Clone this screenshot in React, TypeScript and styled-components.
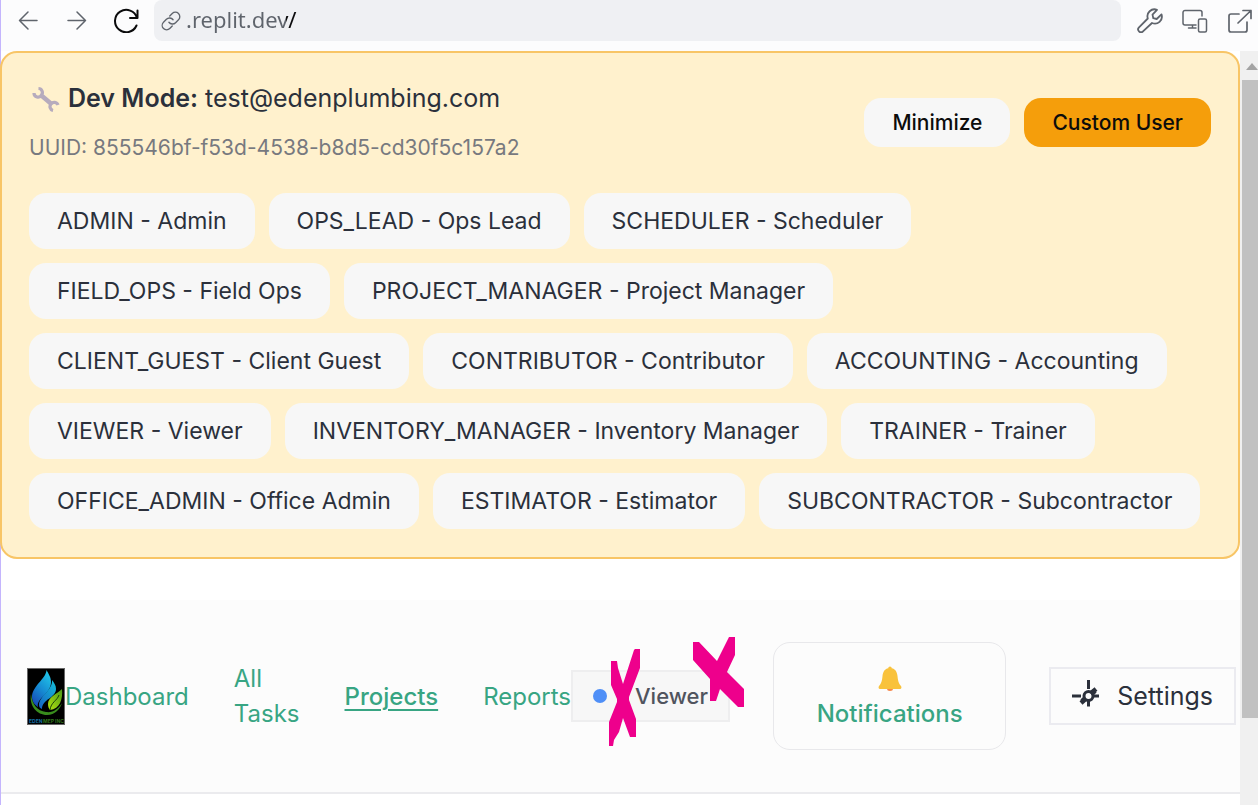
import React from "react";
import styled, { createGlobalStyle } from "styled-components";

const GlobalStyle = createGlobalStyle`
  *, *::before, *::after { box-sizing: border-box; }
  body {
    margin: 0;
    background: #ffffff;
    color: #2b303b;
    font-family: Inter, "Liberation Sans", sans-serif;
  }
  button, input { font-family: inherit; }
  button { cursor: pointer; }
`;

const Window = styled.div`
  display: flex;
  flex-direction: column;
  min-height: 100vh;
  border-left: 1px solid #c4b5fd;
`;

const Toolbar = styled.header`
  display: flex;
  align-items: flex-start;
  height: 51px;
  padding: 0 5px 0 14px;
  background: #fcfcfd;
`;

const IconButton = styled.button<{ $tone?: string }>`
  display: flex;
  align-items: center;
  justify-content: center;
  flex: none;
  width: 26px;
  height: 40px;
  padding: 0;
  border: 0;
  background: none;
  color: ${(p) => p.$tone ?? "#5f646c"};
`;

const History = styled.div`
  display: flex;
  gap: 23px;
`;

const AddressBar = styled.label`
  display: flex;
  align-items: center;
  flex: 1;
  gap: 5px;
  height: 41px;
  margin: 0 16px 0 15px;
  padding: 0 7px;
  border-radius: 8px;
  background: #eff0f3;
  color: #5f646c;
`;

const AddressInput = styled.input`
  flex: 1;
  min-width: 0;
  height: 40px;
  padding: 0 0 4px;
  border: 0;
  outline: 0;
  background: linear-gradient(90deg, #5f646c 100px, #0b0b0c 100px);
  background-clip: text;
  color: transparent;
  font-family: "Noto Sans", sans-serif;
  font-size: 22px;
`;

const Tools = styled.div`
  display: flex;
  gap: 19px;
`;

const Viewport = styled.div`
  display: flex;
  flex: 1;
`;

const Page = styled.main`
  flex: 1;
  min-width: 0;
`;

const DevCard = styled.section`
  padding: 28px 27px;
  margin-left: -1px;
  border: 2px solid #f8c566;
  border-radius: 17px;
  background: #fff1cd;
`;

const CardHeader = styled.div`
  display: flex;
  align-items: center;
  justify-content: space-between;
  margin-bottom: 29px;
`;

const Title = styled.p`
  display: flex;
  align-items: center;
  gap: 8px;
  margin: 0 0 15px;
  font-size: 25px;
  line-height: 35px;
`;

const Strong = styled.strong`
  font-weight: 600;
`;

const Uuid = styled.p`
  margin: 0;
  color: #77797f;
  font-size: 21px;
  line-height: 33px;
`;

const PillGroup = styled.div`
  display: flex;
  flex-wrap: wrap;
  gap: 14px;
`;

const Pill = styled.button<{ $compact?: boolean; $accent?: boolean }>`
  height: ${(p) => (p.$compact ? 49 : 56)}px;
  padding: 0 28px;
  border: 0;
  border-radius: 17px;
  background: ${(p) => (p.$accent ? "#f59e0b" : "#f7f7f7")};
  color: ${(p) => (p.$compact ? "#0c0c0c" : "#2b303b")};
  font-size: ${(p) => (p.$compact ? 21 : 23)}px;
  font-weight: ${(p) => (p.$compact ? 500 : 400)};
  white-space: nowrap;
`;

const Nav = styled.nav`
  position: relative;
  display: flex;
  align-items: center;
  gap: 43px;
  height: 194px;
  margin-top: 41px;
  padding: 0 4px 0 26px;
  border-bottom: 2px solid #ebebee;
  background: #fcfcfc;
  font-size: 24px;
  line-height: 35px;
`;

const NavLinks = styled.div`
  display: flex;
  align-items: center;
  gap: 45px;
`;

const NavGroup = styled.div`
  display: flex;
  align-items: center;
`;

const NavLink = styled.a<{ $active?: boolean }>`
  width: min-content;
  color: #38a583;
  font-weight: ${(p) => (p.$active ? 500 : 400)};
  text-decoration: ${(p) => (p.$active ? "underline" : "none")};
  text-decoration-thickness: 2px;
  text-underline-offset: 4px;
`;

const RoleBadge = styled.div`
  display: flex;
  align-items: center;
  gap: 28px;
  height: 52px;
  padding: 0 20px;
  border: 2px solid #eeeeef;
  background: #f7f7f7;
  color: #50545e;
  font-size: 22px;
  font-weight: 500;
`;

const Dot = styled.span`
  width: 14px;
  height: 14px;
  border-radius: 50%;
  background: #4f8ff7;
`;

const Notifications = styled.button`
  display: flex;
  flex-direction: column;
  align-items: center;
  justify-content: center;
  flex: 1;
  height: 108px;
  padding: 0;
  border: 1px solid #e8e8eb;
  border-radius: 17px;
  background: #fcfcfc;
  color: #38a583;
  font-size: 24px;
  font-weight: 500;
  line-height: 35px;
`;

const BellBox = styled.span`
  display: flex;
  align-items: center;
  height: 35px;
`;

const SettingsButton = styled.button`
  display: flex;
  align-items: center;
  gap: 17px;
  height: 58px;
  padding: 0 21px;
  border: 2px solid #ebebf0;
  background: #fcfcfc;
  color: #2b303b;
  font-size: 25px;
  font-weight: 400;
`;

const Marks = styled.svg`
  position: absolute;
  top: 37px;
  left: 608px;
  pointer-events: none;
`;

const Scrollbar = styled.div`
  display: flex;
  flex-direction: column;
  flex: none;
  width: 18px;
  padding-left: 2px;
  background: #f0f0f0;
`;

const ScrollArrow = styled.div`
  display: flex;
  align-items: center;
  justify-content: flex-end;
  height: 29px;
  padding-top: 3px;
`;

const ScrollTrack = styled.div`
  flex: 1;
`;

const ScrollThumb = styled.div`
  height: 88%;
  background: #c1c1c1;
`;

const Logo = styled.svg`
  flex: none;
`;

const Line = ({ size = 26, width = 1.5, box = size, children }: { size?: number; width?: number; box?: number; children: React.ReactNode }) => (
  <svg width={size} height={size} viewBox={`0 0 ${box} ${box}`} fill="none" stroke="currentColor" strokeWidth={width} strokeLinecap="round" strokeLinejoin="round" aria-hidden="true">
    {children}
  </svg>
);

const FlameLogo = () => (
  <Logo width="38" height="57" viewBox="0 0 38 57" role="img" aria-label="Eden MEP Inc">
    <defs>
      <linearGradient id="blue" x1="0.7" y1="0" x2="0.2" y2="1">
        <stop offset="0" stopColor="#20c4e8" />
        <stop offset="0.5" stopColor="#168bd2" />
        <stop offset="1" stopColor="#1746b5" />
      </linearGradient>
      <linearGradient id="teal" x1="0.9" y1="0" x2="0.2" y2="1">
        <stop offset="0" stopColor="#14bcd8" />
        <stop offset="1" stopColor="#1769c6" />
      </linearGradient>
      <linearGradient id="green" x1="1" y1="0" x2="0" y2="1">
        <stop offset="0" stopColor="#4c9a18" />
        <stop offset="1" stopColor="#b2e30f" />
      </linearGradient>
    </defs>
    <rect x="0.5" y="0.5" width="37" height="56" fill="#000" stroke="#666" />
    <path d="M19.500 2C19 11 5 18 5 29c0 5 3 8 6 10-2-9 13-13 13-25 0-5-2.500-8-4.500-12Z" fill="url(#blue)" />
    <path d="M25 12c1 10-13 16-13 25 0 2 1 3 3 4 0-10 14-11 14-20 0-4-2-6-4-9Z" fill="url(#teal)" />
    <path d="M35 21c-5 5-14 8-14 15 0 3 1 5 2 6 10-1 13-11 12-21Z" fill="url(#green)" />
    <path d="M32 27c-2 6-8 7-9 15" fill="none" stroke="#173f0c" strokeWidth="1" />
    <path d="M4 26C2 38 10 47 20 47c8 0 13-6 15-12-4 6-9 10-16 9C10 43 5 36 4 26Z" fill="#398c1d" />
    <text x="2" y="55" fontSize="5" fontWeight="700" fill="#1670a8">EDEN</text>
    <text x="16" y="55" fontSize="5" fontWeight="700" fill="#30751c">MEP INC</text>
  </Logo>
);

const WrenchEmoji = () => (
  <svg width="31" height="26" viewBox="0 0 31 26" fill="none" stroke="#b6abbd" aria-hidden="true">
    <path d="M13 10 23 18.500" strokeWidth="4.500" />
    <path d="M9.500 2.500a4 4 0 0 1 3 6.500 4 4 0 0 1-7.500-2" strokeWidth="3.200" />
    <path d="M29 19a4 4 0 0 0-7-1 4 4 0 0 0 2 6.500" strokeWidth="3.200" />
  </svg>
);

const Bell = () => (
  <svg width="24" height="26" viewBox="0 0 24 26" aria-hidden="true">
    <path d="M9 22.500a3 2.500 0 0 0 6 0Z" fill="#f7874a" />
    <path d="M12 .5c1 0 1.700.7 1.700 1.800C17.500 3 19 6 19.500 10c.5 5 1 7 3.500 10 .8 1.500.5 3-1 3H2c-1.500 0-1.800-1.500-1-3 2.500-3 3-5 3.500-10C5 6 6.500 3 10.300 2.300 10.300 1.200 11 .5 12 .5Z" fill="#f9c23c" />
  </svg>
);

const Gear = () => (
  <svg width="28" height="32" viewBox="0 0 28 32" fill="none" stroke="currentColor" strokeWidth="3" aria-hidden="true">
    <path d="M16.500 0v9M0 16h9M22 16h5M16.500 21v5.500" />
    <circle cx="16.500" cy="16" r="4.500" />
    <path d="m18.500 13.500 5.500-4.500M14 18.500l-5 4.500M20 11l3 3M10 18l3 3" strokeWidth="4.500" />
  </svg>
);

const roles: [string, string][] = [
  ["ADMIN", "Admin"],
  ["OPS_LEAD", "Ops Lead"],
  ["SCHEDULER", "Scheduler"],
  ["FIELD_OPS", "Field Ops"],
  ["PROJECT_MANAGER", "Project Manager"],
  ["CLIENT_GUEST", "Client Guest"],
  ["CONTRIBUTOR", "Contributor"],
  ["ACCOUNTING", "Accounting"],
  ["VIEWER", "Viewer"],
  ["INVENTORY_MANAGER", "Inventory Manager"],
  ["TRAINER", "Trainer"],
  ["OFFICE_ADMIN", "Office Admin"],
  ["ESTIMATOR", "Estimator"],
  ["SUBCONTRACTOR", "Subcontractor"],
];

export default function App() {
  return (
    <Window>
      <GlobalStyle />
      <Toolbar>
        <History>
          <IconButton aria-label="Back">
            <Line><path d="M22 13.500H4.500M13 5l-8.500 8.500L13 22" /></Line>
          </IconButton>
          <IconButton aria-label="Forward">
            <Line><path d="M4 13.500h17.500M13 5l8.500 8.500L13 22" /></Line>
          </IconButton>
          <IconButton aria-label="Reload" $tone="#0b0b0c">
            <Line width={2}><path d="M24.500 3.500V11H17M24 11A11.200 11.200 0 1 0 23.500 18.500" /></Line>
          </IconButton>
        </History>
        <AddressBar>
          <Line size={20} box={24} width={1.6}>
            <path d="M9.500 13.500a5.300 5.300 0 0 0 8 .5l3.500-3.500a5.300 5.300 0 0 0-7.500-7.500l-3 3M14.500 10.500a5.300 5.300 0 0 0-8-.5L3 13.500a5.300 5.300 0 0 0 7.500 7.500l3-3" />
          </Line>
          <AddressInput aria-label="Address" defaultValue=".replit.dev/" />
        </AddressBar>
        <Tools>
          <IconButton aria-label="Developer tools">
            <Line width={1.8}>
              <path d="M20 2.800a7 7 0 0 0-9.200 8.700L2 20.300a2.800 2.800 0 0 0 4 4l9-8.300a7 7 0 0 0 9.500-8.600l-4.800 4.600-3.400-.8-.8-3.600Z" />
            </Line>
          </IconButton>
          <IconButton aria-label="Device size">
            <Line>
              <path d="M20 9V5.500a2 2 0 0 0-2-2H3a2 2 0 0 0-2 2V16a2 2 0 0 0 2 2h11M10.500 18v3M6.500 21H14" />
              <rect x="16.500" y="12" width="8" height="13" rx="1.500" />
            </Line>
          </IconButton>
          <IconButton aria-label="Open in new tab">
            <Line width={1.700}>
              <path d="M12 7H4a2 2 0 0 0-2 2v14a2 2 0 0 0 2 2h14a2 2 0 0 0 2-2v-8M11 16 24 3.500M16 3.500h8v8" />
            </Line>
          </IconButton>
        </Tools>
      </Toolbar>
      <Viewport>
        <Page>
          <DevCard>
            <CardHeader>
              <div>
                <Title>
                  <WrenchEmoji />
                  <span><Strong>Dev Mode:</Strong> test@edenplumbing.com</span>
                </Title>
                <Uuid>UUID: 855546bf-f53d-4538-b8d5-cd30f5c157a2</Uuid>
              </div>
              <PillGroup>
                <Pill $compact>Minimize</Pill>
                <Pill $compact $accent>Custom User</Pill>
              </PillGroup>
            </CardHeader>
            <PillGroup>
              {roles.map(([code, name]) => (
                <Pill key={code}>{code} - {name}</Pill>
              ))}
            </PillGroup>
          </DevCard>
          <Nav>
            <NavLinks>
              <NavGroup>
                <FlameLogo />
                <NavLink href="#dashboard">Dashboard</NavLink>
              </NavGroup>
              <NavLink href="#tasks">All Tasks</NavLink>
              <NavLink href="#projects" $active>Projects</NavLink>
              <NavGroup>
                <NavLink href="#reports">Reports</NavLink>
                <RoleBadge><Dot />Viewer</RoleBadge>
              </NavGroup>
            </NavLinks>
            <Notifications>
              <BellBox><Bell /></BellBox>
              Notifications
            </Notifications>
            <SettingsButton><Gear />Settings</SettingsButton>
            <Marks width="138" height="112" viewBox="0 0 138 112" fill="#ee008c" aria-hidden="true">
              <path d="M2 24h6l1 7 5 16 11-34 1-1h5v19L20 60v3l7 19v18h-6l-7-19-4 14-5 8-1 6H0V85l8-20v-3L2 48Z" />
              <path d="M84 5h6l18 19L120 0h6v18l-8 17 17 17v18h-6l-18-18-4 12h-6V42L84 23Z" />
            </Marks>
          </Nav>
        </Page>
        <Scrollbar aria-hidden="true">
          <ScrollArrow>
            <svg width="12" height="8" viewBox="0 0 12 8"><path d="M0 7 6 0l6 7Z" fill="#a3a3a3" /></svg>
          </ScrollArrow>
          <ScrollTrack><ScrollThumb /></ScrollTrack>
        </Scrollbar>
      </Viewport>
    </Window>
  );
}
